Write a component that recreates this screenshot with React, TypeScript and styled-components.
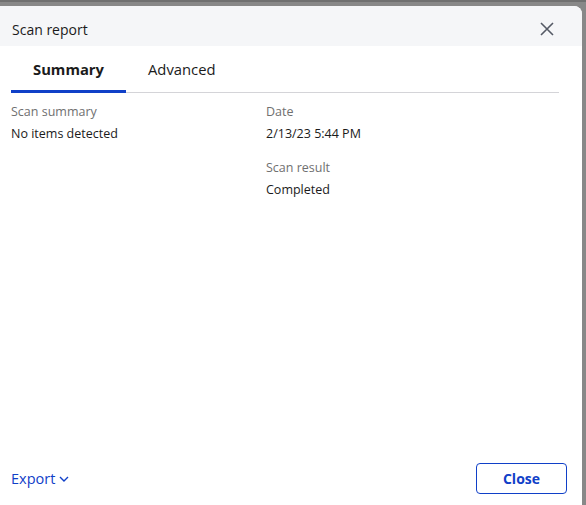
import React from 'react';
import styled, { createGlobalStyle } from 'styled-components';

const GlobalStyle = createGlobalStyle`
    html, body {
        margin: 0;
        padding: 0;
        background: #858585;
    }
    body {
        font-family: "Open Sans", "Liberation Sans", sans-serif;
    }
`;

const Backdrop = styled.div`
    width: 586px;
    height: 505px;
    box-sizing: border-box;
    padding: 6px 4px 0 0;
    background: linear-gradient(#707070 0, #707070 2px, #888888 2px);
    overflow: hidden;
`;

const Dialog = styled.div`
    width: 582px;
    height: 499px;
    background: #ffffff;
    border-radius: 0 8px 0 0;
    display: flex;
    flex-direction: column;
    overflow: hidden;
`;

const Header = styled.div`
    height: 40px;
    flex: none;
    box-sizing: border-box;
    background: #f5f6f8;
    display: flex;
    align-items: center;
    justify-content: space-between;
    padding: 6px 28px 0 12px;
`;

const Title = styled.div`
    font-size: 14px;
    color: #1b1b1b;
`;

const CloseIcon = styled.button`
    border: none;
    background: none;
    padding: 0;
    width: 14px;
    height: 14px;
    display: flex;
    cursor: pointer;
`;

const TabList = styled.div`
    display: flex;
    margin: 0 23px 0 11px;
    border-bottom: 1px solid #d4d4d8;
    height: 46px;
`;

const Tab = styled.div<{ $active?: boolean }>`
    padding: 0 22px;
    display: flex;
    align-items: center;
    font-size: 14.8px;
    font-weight: ${p => (p.$active ? 700 : 400)};
    color: #1b1b1b;
    border-bottom: 3px solid ${p => (p.$active ? '#1040c8' : 'transparent')};
    margin-bottom: -1px;
    padding-top: 2px;
    box-sizing: border-box;
`;

const Body = styled.div`
    flex: 1;
    display: grid;
    grid-template-columns: 255px 1fr;
    align-content: start;
    padding: 10px 11px 0;
`;

const Column = styled.div`
    display: flex;
    flex-direction: column;
    gap: 16px;
`;

const Field = styled.div`
    display: flex;
    flex-direction: column;
    gap: 4px;
`;

const Label = styled.div`
    font-size: 12.5px;
    line-height: 18px;
    color: #707070;
`;

const Value = styled.div`
    font-size: 12.5px;
    line-height: 18px;
    color: #1b1b1b;
`;

const Footer = styled.div`
    flex: none;
    display: flex;
    justify-content: space-between;
    align-items: center;
    padding: 0 15px 11px 11px;
`;

const ExportLink = styled.button`
    border: none;
    background: none;
    padding: 0;
    display: flex;
    align-items: center;
    gap: 4px;
    font-family: inherit;
    font-size: 14.5px;
    color: #1040c8;
    cursor: pointer;
`;

const CloseButton = styled.button`
    width: 91px;
    height: 31px;
    border: 1px solid #1040c8;
    border-radius: 4px;
    background: #ffffff;
    color: #1040c8;
    font-family: inherit;
    font-size: 14px;
    font-weight: 700;
    cursor: pointer;
`;

const fields = {
    left: [{ label: 'Scan summary', value: 'No items detected' }],
    right: [
        { label: 'Date', value: '2/13/23 5:44 PM' },
        { label: 'Scan result', value: 'Completed' },
    ],
};

export default function App() {
    return (
        <>
            <GlobalStyle />
            <Backdrop>
                <Dialog>
                    <Header>
                        <Title>Scan report</Title>
                        <CloseIcon aria-label="Close">
                            <svg width="14" height="14" viewBox="0 0 14 14">
                                <path d="M1 1 L13 13 M13 1 L1 13" stroke="#555a66" strokeWidth="1.6" />
                            </svg>
                        </CloseIcon>
                    </Header>
                    <TabList>
                        <Tab $active>Summary</Tab>
                        <Tab>Advanced</Tab>
                    </TabList>
                    <Body>
                        <Column>
                            {fields.left.map(f => (
                                <Field key={f.label}>
                                    <Label>{f.label}</Label>
                                    <Value>{f.value}</Value>
                                </Field>
                            ))}
                        </Column>
                        <Column>
                            {fields.right.map(f => (
                                <Field key={f.label}>
                                    <Label>{f.label}</Label>
                                    <Value>{f.value}</Value>
                                </Field>
                            ))}
                        </Column>
                    </Body>
                    <Footer>
                        <ExportLink>
                            Export
                            <svg width="10" height="6" viewBox="0 0 10 6">
                                <path d="M1 1 L5 5 L9 1" stroke="#1040c8" strokeWidth="1.4" fill="none" />
                            </svg>
                        </ExportLink>
                        <CloseButton>Close</CloseButton>
                    </Footer>
                </Dialog>
            </Backdrop>
        </>
    );
}
